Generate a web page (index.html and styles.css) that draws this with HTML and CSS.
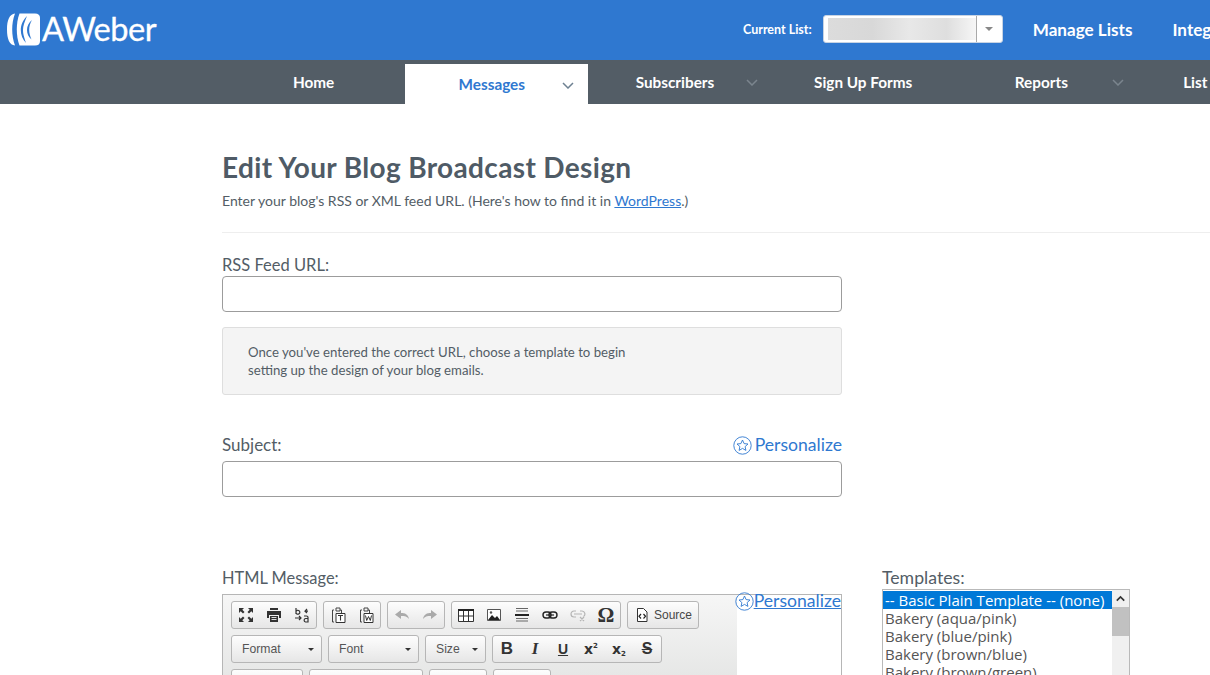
FILE: index.html
```html
<!DOCTYPE html>
<html lang="en">
<head>
<meta charset="utf-8">
<title>Edit Your Blog Broadcast Design</title>
<link rel="stylesheet" href="styles.css">
</head>
<body>
<header class="topbar">
  <a class="logo" href="#">
    <svg class="logo-mark" width="33" height="33" viewBox="0 0 33 33"><path d="M8 0.500C2.500 1 0 7 0 16.500S2.500 32 8 32.500C6 27 5.200 22 5.200 16.500S6 6 8 0.500Z" fill="#fff"/><path d="M12.500 .5H28Q33 .5 33 5V28Q33 32.500 28 32.500H12.500C10.500 27 9.800 22 9.800 16.500S10.500 6 12.500 .5Z" fill="#fff"/><path d="M20 3C15.500 8 13.800 12 13.800 17S15.500 26 19 30C17 24 16 21 16 17S17.500 9 20 3Z" fill="#2f78d0"/><path d="M25 7C21.500 10 20 13 20 17S21.500 24 24.500 26.500C23 23 22.200 20 22.200 17S23 10 25 7Z" fill="#2f78d0"/></svg>
    <span class="logo-text">AWeber</span>
  </a>
  <div class="top-right">
    <span class="current-label">Current List:</span>
    <div class="list-select">
      <div class="list-value"><div class="list-blur"></div></div>
      <div class="list-caret"><span class="caret-gray"></span></div>
    </div>
    <a class="top-link" href="#">Manage Lists</a>
    <a class="top-link" href="#">Integrations</a>
  </div>
</header>
<nav class="mainnav">
  <a class="navitem" href="#"><span>Home</span></a>
  <a class="navitem has-sub active" href="#"><span>Messages</span><svg class="chev" width="12" height="7" viewBox="0 0 12 7"><path d="M1 1l5 5 5-5" fill="none" stroke="currentColor" stroke-width="1.500"/></svg></a>
  <a class="navitem has-sub" href="#"><span>Subscribers</span><svg class="chev" width="12" height="7" viewBox="0 0 12 7"><path d="M1 1l5 5 5-5" fill="none" stroke="currentColor" stroke-width="1.500"/></svg></a>
  <a class="navitem" href="#"><span>Sign Up Forms</span></a>
  <a class="navitem has-sub" href="#"><span>Reports</span><svg class="chev" width="12" height="7" viewBox="0 0 12 7"><path d="M1 1l5 5 5-5" fill="none" stroke="currentColor" stroke-width="1.500"/></svg></a>
  <a class="navitem has-sub" href="#"><span>List Options</span></a>
</nav>
<main class="page">
  <h1 class="title">Edit Your Blog Broadcast Design</h1>
  <p class="subtitle">Enter your blog's RSS or XML feed URL. (Here's how to find it in <a href="#">WordPress</a>.)</p>
  <hr class="rule">
  <div class="column">
    <label class="field-label label-rss">RSS Feed URL:</label>
    <div class="textbox"></div>
    <div class="notice">Once you've entered the correct URL, choose a template to begin<br>setting up the design of your blog emails.</div>
    <div class="label-row">
      <label class="field-label">Subject:</label>
      <a class="personalize" href="#"><svg width="19" height="19" viewBox="0 0 19 19"><circle cx="9.500" cy="9.500" r="8.700" fill="none" stroke="#2f78d0" stroke-width="0.900"/><path d="M9.500 4l1.600 3.600 3.900.4-2.900 2.600.8 3.800-3.400-2-3.400 2 .8-3.800L4 8l3.900-.4z" fill="none" stroke="#2f78d0" stroke-width="0.900"/></svg><span>Personalize</span></a>
    </div>
    <div class="textbox"></div>
  </div>
  <div class="editor-row">
    <div class="editor-col">
      <label class="field-label label-html">HTML Message:</label>
      <div class="editor">
        <a class="personalize overlay" href="#"><svg width="19" height="19" viewBox="0 0 19 19"><circle cx="9.500" cy="9.500" r="8.700" fill="none" stroke="#2f78d0" stroke-width="0.900"/><path d="M9.500 4l1.600 3.600 3.900.4-2.900 2.600.8 3.800-3.400-2-3.400 2 .8-3.800L4 8l3.900-.4z" fill="none" stroke="#2f78d0" stroke-width="0.900"/></svg><span>Personalize</span></a>
        <div class="toolbar">
          <div class="tb-row">
            <div class="tb-group">
              <span class="tb-btn"><svg width="16" height="16" viewBox="0 0 16 16"><path d="M1 1h5L4.300 2.700 6.500 5 5 6.500 2.700 4.300 1 6zM15 1v5l-1.700-1.700L11 6.500 9.500 5l2.200-2.300L10 1zM1 15v-5l1.700 1.700L5 9.500 6.500 11l-2.200 2.300L6 15zM15 15h-5l1.700-1.700L9.500 11 11 9.500l2.300 2.200L15 10z" fill="#333"/></svg></span>
              <span class="tb-btn"><svg width="16" height="16" viewBox="0 0 16 16"><path d="M4 1h8v2H4zM1 4h14v7h-2V8H3v3H1z" fill="#333"/><path d="M4 9h8v6H4z" fill="#333"/><path d="M5.500 10.500h5M5.500 12.500h5" stroke="#ddd"/></svg></span>
              <span class="tb-btn"><svg width="16" height="16" viewBox="0 0 16 16"><path d="M2 1v6M2 4.500a2 2 0 1 1 0 1.500M13 2l-2 2.200 2 1.800M11 4.200h3M1 11h6M5 9l2 2-2 2M10 9h2.500a1.500 1.500 0 0 1 1.500 1.500V15h-2.500a1.800 1.800 0 0 1 0-3.500H14" fill="none" stroke="#333" stroke-width="1.200"/></svg></span>
            </div>
            <div class="tb-group">
              <span class="tb-btn"><svg width="16" height="16" viewBox="0 0 16 16"><path d="M4 3H2.500v12H4M6 1h4v3H6zM10 3h1.500v3" fill="none" stroke="#444"/><path d="M6 6.500h9v9H6z" fill="#fff" stroke="#333"/><path d="M8 8.500h5M10.500 8.500v5" stroke="#333" stroke-width="1.100"/></svg></span>
              <span class="tb-btn"><svg width="16" height="16" viewBox="0 0 16 16"><path d="M4 3H2.500v12H4M6 1h4v3H6zM10 3h1.500v3" fill="none" stroke="#444"/><path d="M6 6.500h9v9H6z" fill="#fff" stroke="#333"/><path d="M7.500 8.500l1.200 5 1.800-4 1.800 4 1.200-5" fill="none" stroke="#333"/></svg></span>
            </div>
            <div class="tb-group">
              <span class="tb-btn"><svg width="16" height="16" viewBox="0 0 16 16"><path d="M7 3v3c4 0 7 1 8 6-2-2.500-4-3-8-3v3L1 7.500z" fill="#aaa"/></svg></span>
              <span class="tb-btn"><svg width="16" height="16" viewBox="0 0 16 16"><path d="M9 3v3c-4 0-7 1-8 6 2-2.500 4-3 8-3v3l6-4.500z" fill="#aaa"/></svg></span>
            </div>
            <div class="tb-group">
              <span class="tb-btn"><svg width="16" height="16" viewBox="0 0 16 16"><path d="M0 2h16v2H0z" fill="#222"/><path d="M.5 4v10.500h15V4M5.500 4v10.500M10.500 4v10.500M.5 9h15" fill="#fff" stroke="#333"/></svg></span>
              <span class="tb-btn"><svg width="16" height="16" viewBox="0 0 16 16"><path d="M1.500 2.500h13v11h-13z" fill="#fff" stroke="#555"/><path d="M2 13l4-5 3 3 2-2 3 4z" fill="#222"/><circle cx="5" cy="5.500" r="1.200" fill="#555"/></svg></span>
              <span class="tb-btn"><svg width="16" height="16" viewBox="0 0 16 16"><path d="M1 7h14v2H1z" fill="#222"/><path d="M2 1.500h12M2 4h12M2 11.500h12M2 14h12" stroke="#666"/></svg></span>
              <span class="tb-btn"><svg width="16" height="16" viewBox="0 0 16 16"><rect x="1" y="5" width="8" height="6" rx="3" fill="none" stroke="#222" stroke-width="1.400"/><rect x="7" y="5" width="8" height="6" rx="3" fill="none" stroke="#222" stroke-width="1.400"/><path d="M4 8h8" stroke="#222" stroke-width="1.200"/></svg></span>
              <span class="tb-btn"><svg width="16" height="16" viewBox="0 0 16 16"><path d="M6 4H4a3 3 0 0 0 0 6h2M10 4h2a3 3 0 0 1 1.500 5.500M4 7h8M10 10l4 4M14 10l-4 4" fill="none" stroke="#b5b5b5" stroke-width="1.200"/></svg></span>
              <span class="tb-btn omega">Ω</span>
            </div>
            <div class="tb-group">
              <span class="tb-btn tb-text"><svg width="16" height="16" viewBox="0 0 16 16"><path d="M3.500 1.500h6l3.500 3.500v9.500h-9.500z" fill="#fff" stroke="#333"/><path d="M7 7L5 9.300l2 2.200M9.500 7l2 2.300-2 2.200" fill="none" stroke="#222" stroke-width="1.200"/></svg><span>Source</span></span>
            </div>
          </div>
          <div class="tb-row">
            <div class="tb-combo wide"><span>Format</span><i class="caret"></i></div>
            <div class="tb-combo wide"><span>Font</span><i class="caret"></i></div>
            <div class="tb-combo narrow"><span>Size</span><i class="caret"></i></div>
            <div class="tb-group">
              <span class="tb-btn glyph bold">B</span>
              <span class="tb-btn glyph italic">I</span>
              <span class="tb-btn glyph under">U</span>
              <span class="tb-btn glyph script"><span>x<sup>2</sup></span></span>
              <span class="tb-btn glyph script"><span>x<sub>2</sub></span></span>
              <span class="tb-btn glyph strike">S</span>
            </div>
          </div>
          <div class="tb-row">
            <div class="tb-group g72"><span class="tb-btn"></span><span class="tb-btn"><svg width="16" height="16" viewBox="0 0 16 16"><path d="M2 4h12" stroke="#222" stroke-width="3"/></svg></span></div>
            <div class="tb-group g114"></div>
            <div class="tb-group g58"></div>
            <div class="tb-group g58"></div>
          </div>
        </div>
        <div class="editor-body"></div>
      </div>
    </div>
    <div class="templates">
      <label class="field-label label-tpl">Templates:</label>
      <div class="listbox">
        <ul class="options">
          <li class="selected">-- Basic Plain Template -- (none)</li>
          <li>Bakery (aqua/pink)</li>
          <li>Bakery (blue/pink)</li>
          <li>Bakery (brown/blue)</li>
          <li>Bakery (brown/green)</li>
          <li>Bakery (gray/green)</li>
        </ul>
        <div class="scrollbar">
          <svg class="scroll-up" width="16" height="16" viewBox="0 0 16 16"><path d="M4.500 10L8 6.500 11.500 10" fill="none" stroke="#333" stroke-width="1.600"/></svg>
          <div class="scroll-thumb"></div>
        </div>
      </div>
    </div>
  </div>
</main>
</body>
</html>
```
FILE: styles.css
```css
* { box-sizing: border-box; }
html, body { margin: 0; height: 675px; overflow: hidden; background: #fff; }
body { font-family: "Lato", "Noto Sans", sans-serif; color: #535d66; }
a { text-decoration: none; color: inherit; }

.topbar { height: 60px; background: #2f78d0; display: flex; align-items: center; padding: 0 0 2px 7px; overflow: hidden; white-space: nowrap; }
.logo { display: flex; align-items: center; gap: 2px; width: 151px; color: #fff; flex: none; }
.logo-mark { display: block; }
.logo-text { font-size: 32.600px; line-height: 40px; letter-spacing: -0.5px; -webkit-text-stroke: 0.3px #fff; }
.top-right { display: flex; align-items: center; flex: none; margin-left: 585px; }
.current-label { font-size: 12.500px; font-weight: 700; color: #fff; margin-right: 11px; }
.list-select { width: 180px; height: 28px; background: #fff; border: 1px solid #c7d3e3; border-radius: 3px; display: flex; margin-right: 30px; }
.list-value { width: 153px; padding: 2px 0 2px 4px; border-right: 1px solid #a9a9a9; }
.list-blur { height: 22px; background: linear-gradient(90deg, #dcdcdc, #d8d8d8 30%, #e8e8e8 55%, #dedede 80%, #f6f6f6); }
.list-caret { flex: 1; display: flex; align-items: center; justify-content: center; }
.caret-gray { width: 0; height: 0; border: 4px solid transparent; border-top-color: #888; border-bottom: 0; }
.top-link { font-size: 17.100px; font-weight: 700; color: #fff; margin-right: 40px; }

.mainnav { height: 44px; background: #535d66; display: grid; grid-template-columns: repeat(6, 183.200px); padding-left: 222px; overflow: hidden; white-space: nowrap; }
.navitem { position: relative; display: flex; align-items: center; justify-content: center; font-size: 15.300px; font-weight: 700; color: #fff; }
.navitem.has-sub span { margin-right: 10px; }
.chev { position: absolute; right: 14px; top: 19px; color: #7b858e; }
.active { margin-top: 4px; background: #fff; color: #2f78d0; }
.active .chev { color: #6e8192; top: 18px; }

.page { padding-left: 222px; }
.title { margin: 46px 0 0; font-size: 28px; line-height: 34px; font-weight: 700; letter-spacing: 0.350px; color: #4f5b66; }
.subtitle { margin: 7px 0 0; font-size: 14px; line-height: 20px; color: #535d66; }
.subtitle a { color: #2f78d0; text-decoration: underline; }
.rule { margin: 21px 0 0; border: 0; border-top: 1px solid #eeeeee; }
.column { width: 620px; }
.field-label { display: block; font-size: 17px; line-height: 20px; color: #535d66; }
.column > .field-label { margin-top: 22px; }
.label-rss { font-size: 16.500px; }
.label-html { font-size: 16.400px; }
.label-tpl { font-size: 17.700px; }
.textbox { height: 36px; margin-top: 1px; background: #fff; border: 1px solid #9c9c9c; border-radius: 4px; }
.notice { margin-top: 15px; height: 68px; padding: 15px 25px; background: #f4f4f4; border: 1px solid #dedede; border-radius: 3px; font-size: 13.200px; line-height: 18px; color: #535d66; }
.label-row { display: flex; align-items: center; justify-content: space-between; margin-top: 40px; height: 20px; }
.label-row + .textbox { margin-top: 6px; }
.personalize { display: flex; align-items: center; gap: 3px; font-size: 17.600px; line-height: 20px; color: #2f78d0; }
.personalize svg { flex: none; }

.editor-row { display: flex; gap: 40px; margin-top: 71px; align-items: flex-start; }
.editor-col { width: 620px; flex: none; }
.editor { position: relative; height: 200px; margin-top: 6px; display: flex; border: 1px solid #b6b6b6; }
.overlay { position: absolute; right: 0; top: -4px; gap: 0; text-decoration: underline; }
.toolbar { width: 514px; flex: none; padding: 6px 8px; background: linear-gradient(#f6f6f6, #cfd1cf); }
.editor-body { flex: 1; background: #fff; }
.tb-row { display: flex; gap: 6px; margin-bottom: 6px; height: 28px; }
.tb-group { display: flex; height: 28px; background: linear-gradient(#fdfdfd, #e6e6e6); border: 1px solid #b6b6b6; border-radius: 3px; }
.tb-btn { width: 28px; height: 26px; display: flex; align-items: center; justify-content: center; color: #333; font-family: "Liberation Sans", sans-serif; }
.tb-text { width: 70px; gap: 4px; font-size: 12px; color: #474747; }
.omega { font-family: "Liberation Serif", serif; font-size: 21px; font-weight: 700; }
.glyph { font-size: 15px; font-weight: 700; }
.bold { font-size: 17px; }
.italic { font-style: italic; font-family: "Liberation Serif", serif; font-size: 17px; }
.under { text-decoration: underline; font-size: 14px; }
.script { font-size: 14px; font-family: "DejaVu Sans", sans-serif; }
.script sup, .script sub { font-size: 7px; line-height: 0; }
.script sub { vertical-align: -2px; }
.strike { text-decoration: line-through; font-size: 16px; }
.tb-combo { display: flex; align-items: center; justify-content: space-between; height: 28px; padding: 0 7px 0 10px; background: linear-gradient(#fdfdfd, #e6e6e6); border: 1px solid #b6b6b6; border-radius: 3px; font-family: "Liberation Sans", sans-serif; font-size: 12.200px; color: #555; }
.wide { width: 91px; }
.narrow { width: 61px; }
.caret { width: 0; height: 0; border: 3px solid transparent; border-top-color: #333; border-bottom: 0; }
.g72 { width: 72px; justify-content: flex-end; }
.g114 { width: 114px; }
.g58 { width: 58px; }

.templates { width: 248px; flex: none; }
.listbox { display: flex; height: 200px; margin-top: 1px; border: 1px solid #b9b9b9; padding: 1px 0 0 0; background: #fff; }
.options { flex: 1; min-width: 0; list-style: none; margin: 0; padding: 0; font-family: "Open Sans", sans-serif; font-size: 15px; line-height: 18px; color: #555; white-space: nowrap; }
.options li { padding-left: 2px; }
.options .selected { background: #0078d7; color: #fff; }
.scrollbar { width: 17px; flex: none; margin-top: -1px; background: #f0f0f0; }
.scroll-up { display: block; width: 17px; height: 17px; }
.scroll-thumb { height: 29px; background: #c1c1c1; }
```
